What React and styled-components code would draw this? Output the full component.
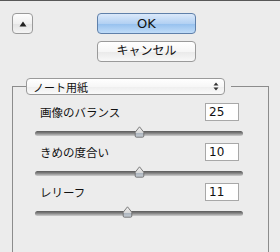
import React from 'react';
import styled, { createGlobalStyle } from 'styled-components';

const Global = createGlobalStyle`
  html, body {
    margin: 0;
    padding: 0;
    background: #ececec;
  }
  body {
    font-family: "DejaVu Sans", "Noto Sans CJK JP", sans-serif;
    color: #111;
  }
`;

const Panel = styled.div`
  width: 280px;
  height: 252px;
  box-sizing: border-box;
  border-top: 1px solid #585858;
  overflow: hidden;
`;

const Top = styled.div`
  display: flex;
  align-items: flex-start;
  padding: 12px 0 0 12px;
`;

const SmallButton = styled.button`
  width: 21px;
  height: 21px;
  padding: 0;
  border: 1px solid #9a9a9a;
  border-radius: 4px;
  background: linear-gradient(#fdfdfd, #f0f0f0 50%, #e4e4e4 51%, #f4f4f4);
  display: flex;
  align-items: center;
  justify-content: center;
`;

const Actions = styled.div`
  display: flex;
  flex-direction: column;
  gap: 7px;
  margin-left: 64px;
`;

const PushButton = styled.button`
  width: 99px;
  height: 21px;
  padding: 0;
  border-radius: 4px;
  border: 1px solid ${p => (p.primary ? '#5f80aa' : '#9a9a9a')};
  background: ${p =>
    p.primary
      ? 'linear-gradient(#dbe9fa, #b3d1f3 50%, #95c0ee 51%, #c0dcf8)'
      : 'linear-gradient(#ffffff, #f6f6f6 50%, #e9e9e9 51%, #f8f8f8)'};
  font-family: "DejaVu Sans", "Noto Sans CJK JP", sans-serif;
  font-size: ${p => (p.primary ? '13px' : '12px')};
  color: #111;
  line-height: 19px;
`;

const Group = styled.fieldset`
  margin: 16px 0 0 12px;
  padding: 0;
  width: 257px;
  min-width: 0;
  height: 200px;
  box-sizing: border-box;
  border: 1px solid #8c8c8c;
`;

const Legend = styled.legend`
  margin-left: 13px;
  padding: 0 6px 0 0;
`;

const Popup = styled.div`
  width: 199px;
  height: 17px;
  box-sizing: border-box;
  border: 1px solid #9a9a9a;
  border-radius: 4px;
  background: linear-gradient(#ffffff, #f7f7f7 50%, #eeeeee 51%, #fafafa);
  display: flex;
  align-items: center;
  justify-content: space-between;
  padding: 0 5px 0 6px;
  font-size: 11px;
`;

const Rows = styled.div`
  width: 208px;
  margin-left: 22px;
  padding-top: 8px;
  display: flex;
  flex-direction: column;
  gap: 5px;
`;

const Row = styled.div`
  display: flex;
  flex-direction: column;
  gap: 5px;
`;

const LabelLine = styled.div`
  display: flex;
  align-items: center;
  justify-content: space-between;
  padding: 0 4px 0 5px;
  font-size: 11.5px;
`;

const NumberBox = styled.div`
  width: 34px;
  height: 18px;
  box-sizing: border-box;
  border: 1px solid #a8a8a8;
  background: #fff;
  font-size: 12px;
  line-height: 16px;
  padding-left: 3px;
`;

const Track = styled.div`
  position: relative;
  height: 12px;
  display: flex;
  align-items: center;

  &::before {
    content: '';
    flex: 1;
    height: 5px;
    margin-top: 2px;
    border-radius: 3px;
    background: linear-gradient(#5a5a5a, #7e7e7e 40%, #b4b4b4 80%, #cfcfcf);
  }
`;

const Thumb = styled.svg`
  position: absolute;
  top: 0;
  margin-left: -5px;
`;

const Knob = ({ at }) => (
  <Thumb width="11" height="12" viewBox="0 0 11 12" style={{ left: at }}>
    <defs>
      <linearGradient id="kg" x1="0" y1="0" x2="0" y2="1">
        <stop offset="0" stopColor="#f4f4f4" />
        <stop offset="0.55" stopColor="#d8d8d8" />
        <stop offset="0.56" stopColor="#a9b2bc" />
        <stop offset="1" stopColor="#c8ced4" />
      </linearGradient>
    </defs>
    <path
      d="M5.5 0.8 L9.8 6.2 L9.8 10 Q9.8 11.2 8.6 11.2 L2.4 11.2 Q1.2 11.2 1.2 10 L1.2 6.2 Z"
      fill="url(#kg)"
      stroke="#6e6e6e"
      strokeWidth="0.9"
    />
  </Thumb>
);

const sliders = [
  { label: '画像のバランス', value: '25', at: 104 },
  { label: 'きめの度合い', value: '10', at: 104 },
  { label: 'レリーフ', value: '11', at: 92 },
];

export default function App() {
  return (
    <Panel>
      <Global />
      <Top>
        <SmallButton>
          <svg width="8" height="6" viewBox="0 0 8 6">
            <path d="M4 0.5 L7.5 5.5 L0.5 5.5 Z" fill="#222" />
          </svg>
        </SmallButton>
        <Actions>
          <PushButton primary>OK</PushButton>
          <PushButton>キャンセル</PushButton>
        </Actions>
      </Top>
      <Group>
        <Legend>
          <Popup>
            <span>ノート用紙</span>
            <svg width="6" height="9" viewBox="0 0 6 9">
              <path d="M3 0.5 L5.5 3.5 L0.5 3.5 Z M3 8.5 L5.5 5.5 L0.5 5.5 Z" fill="#333" />
            </svg>
          </Popup>
        </Legend>
        <Rows>
          {sliders.map(s => (
            <Row key={s.label}>
              <LabelLine>
                <span>{s.label}</span>
                <NumberBox>{s.value}</NumberBox>
              </LabelLine>
              <Track>
                <Knob at={s.at} />
              </Track>
            </Row>
          ))}
        </Rows>
      </Group>
    </Panel>
  );
}
